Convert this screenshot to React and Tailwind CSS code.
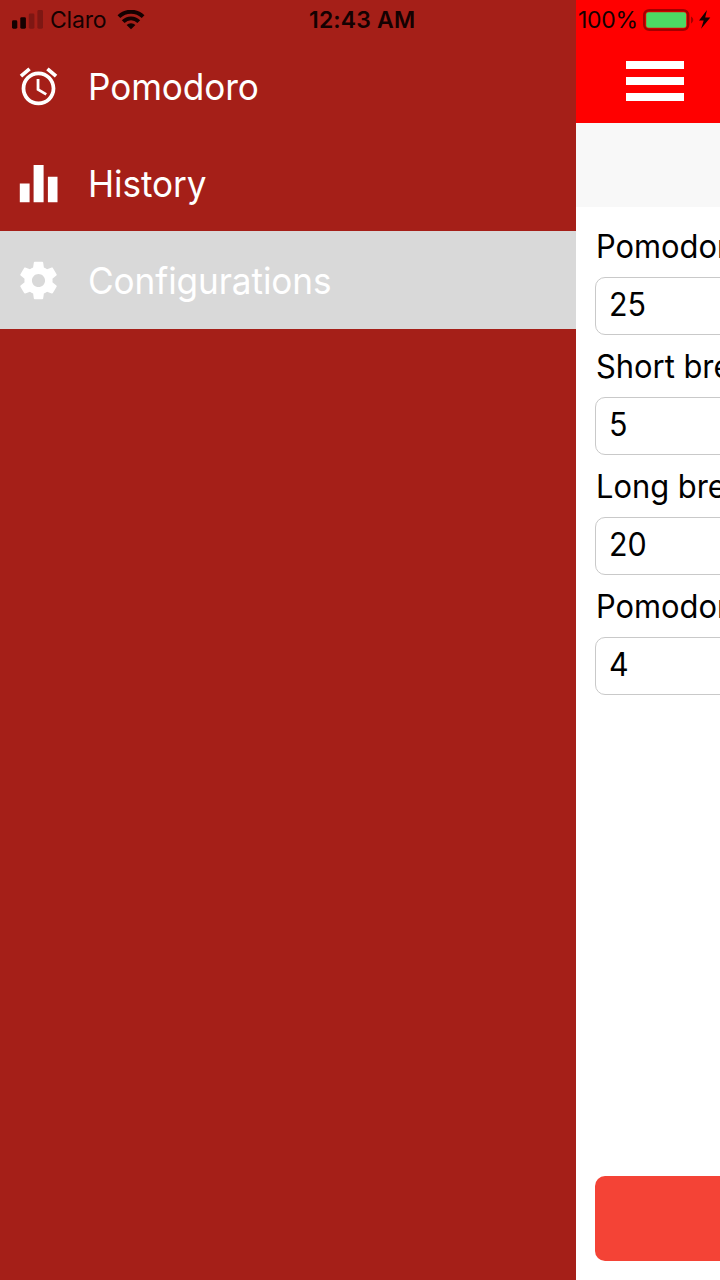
import React from 'react';

function AlarmIcon() {
  return (
    <svg viewBox="0 0 24 24" className="h-[45px] w-[45px] fill-white">
      <path d="M22 5.72l-4.6-3.86-1.29 1.53 4.6 3.86L22 5.72zM7.88 3.39L6.6 1.86 2 5.71l1.29 1.53 4.59-3.85zM12.5 8H11v6l4.75 2.85.75-1.23-4-2.37V8zM12 4c-4.97 0-9 4.03-9 9s4.02 9 9 9c4.97 0 9-4.03 9-9s-4.03-9-9-9zm0 16c-3.87 0-7-3.13-7-7s3.13-7 7-7 7 3.13 7 7-3.13 7-7 7z" />
    </svg>
  );
}

function ChartIcon() {
  return (
    <svg viewBox="0 0 45 45" className="h-[45px] w-[45px] fill-white">
      <path d="M3.8 22.5h9.8V41.3H3.8zM17.6 4h10v37.3h-10zM31.9 15.7h9.6v25.6h-9.6z" />
    </svg>
  );
}

function GearIcon() {
  return (
    <svg viewBox="0 0 24 24" className="h-[45px] w-[45px] fill-white">
      <path d="M19.43 12.98c.04-.32.07-.64.07-.98s-.03-.66-.07-.98l2.11-1.65c.19-.15.24-.42.12-.64l-2-3.46c-.12-.22-.39-.3-.61-.22l-2.49 1c-.52-.4-1.08-.73-1.69-.98l-.38-2.65C14.46 2.18 14.25 2 14 2h-4c-.25 0-.46.18-.49.42l-.38 2.65c-.61.25-1.17.59-1.69.98l-2.49-1c-.23-.09-.49 0-.61.22l-2 3.46c-.13.22-.07.49.12.64l2.11 1.65c-.04.32-.07.65-.07.98s.03.66.07.98l-2.11 1.65c-.19.15-.24.42-.12.64l2 3.46c.12.22.39.3.61.22l2.49-1c.52.4 1.08.73 1.69.98l.38 2.65c.03.24.24.42.49.42h4c.25 0 .46-.18.49-.42l.38-2.65c.61-.25 1.17-.59 1.69-.98l2.49 1c.23.09.49 0 .61-.22l2-3.46c.12-.22.07-.49-.12-.64l-2.11-1.65zM12 15.5c-1.93 0-3.5-1.57-3.5-3.5s1.57-3.5 3.5-3.5 3.5 1.57 3.5 3.5-1.57 3.5-3.5 3.5z" />
    </svg>
  );
}

function StatusBar() {
  return (
    <div className="absolute inset-x-0 top-0 flex h-10 items-center text-[23px] leading-10 text-[#140101]">
      <svg viewBox="0 0 32 20" className="ml-3 h-5 w-8">
        <rect x="0" y="10.3" width="5.3" height="8.4" rx="1.4" fill="#140101" />
        <rect x="8.3" y="7.2" width="5.6" height="11.5" rx="1.4" fill="#140101" />
        <rect x="16.8" y="3.6" width="5.6" height="15.1" rx="1.4" fill="#7e1713" />
        <rect x="25.4" y="0" width="5.6" height="18.7" rx="1.4" fill="#7e1713" />
      </svg>
      <span className="ml-[6px] w-[57px] whitespace-nowrap tracking-[-0.2px]">Claro</span>
      <svg viewBox="0 0 28 20" className="ml-[10px] h-5 w-7">
        <g fill="none" stroke="#140101" strokeWidth="3.9">
          <path d="M1.9 6.6a17.4 17.4 0 0 1 24.2 0" />
          <path d="M6.2 11.6a11 11 0 0 1 15.6 0" />
        </g>
        <path d="M14 19.2L9.6 15.1a6 6 0 0 1 8.8 0z" fill="#140101" />
      </svg>
      <span className="ml-[164px] w-[107px] whitespace-nowrap font-semibold tracking-[0.15px]">12:43 AM</span>
      <span className="ml-[162px] w-[59px] whitespace-nowrap tracking-[-0.3px]">100%</span>
      <svg viewBox="0 0 70 24" className="ml-[6px] h-6 w-[70px]">
        <rect x="1.2" y="2.2" width="44" height="19.6" rx="5" fill="none" stroke="#a30000" strokeWidth="2.4" />
        <rect x="3.2" y="4.2" width="40" height="15.6" rx="2.4" fill="#4cd964" />
        <path d="M48 8.6c3 1.5 3 5.3 0 6.8z" fill="#a30000" />
        <path d="M64 2L56 12.6h4.7l-2.6 8.2 9.2-11.2h-5.1z" fill="#140101" />
      </svg>
    </div>
  );
}

function MenuItem({ icon, label, active }) {
  return (
    <div className={`flex items-center pl-4 ${active ? 'h-[98px] bg-[#d9d9d9]' : 'h-[97px] pt-[2px]'}`}>
      {icon}
      <span className="ml-[27px] mt-px origin-left scale-x-95 whitespace-nowrap text-[37px] leading-[48px] tracking-[-0.1px] text-white">
        {label}
      </span>
    </div>
  );
}

function Field({ label, value }) {
  return (
    <div className="h-[120px]">
      <div className="h-[50px] origin-left scale-x-[0.965] whitespace-nowrap pl-px pt-px text-[32px] leading-[38px]">
        {label}
      </div>
      <div className="h-[58px] w-[680px] rounded-[10px] border border-[#c9c9c9] pl-[13px] text-[32px] leading-[54px]">
        <span className="inline-block origin-left scale-x-95">{value}</span>
      </div>
    </div>
  );
}

export default function App() {
  return (
    <div className="relative flex h-[1280px] w-[720px] overflow-hidden bg-white font-['Inter',sans-serif]">
      <nav className="w-[576px] shrink-0 bg-[#a51f18] pt-[37px]">
        <MenuItem icon={<AlarmIcon />} label="Pomodoro" />
        <MenuItem icon={<ChartIcon />} label="History" />
        <MenuItem icon={<GearIcon />} label="Configurations" active />
      </nav>
      <main className="flex w-36 shrink-0 flex-col overflow-hidden text-black">
        <header className="h-[123px] bg-[#ff0000] pl-[50px] pt-[60.5px]">
          <div className="flex w-[58px] flex-col gap-2">
            <div className="h-2 bg-white" />
            <div className="h-2 bg-white" />
            <div className="h-2 bg-white" />
          </div>
        </header>
        <div className="h-[84px] bg-[#f8f8f8]" />
        <div className="flex-1 pl-[19px] pt-5">
          <Field label="Pomodoro" value="25" />
          <Field label="Short break" value="5" />
          <Field label="Long break" value="20" />
          <Field label="Pomodoros" value="4" />
        </div>
        <div className="mb-[19px] ml-[19px] h-[85px] w-[680px] rounded-[10px] bg-[#f44336]" />
      </main>
      <StatusBar />
    </div>
  );
}
